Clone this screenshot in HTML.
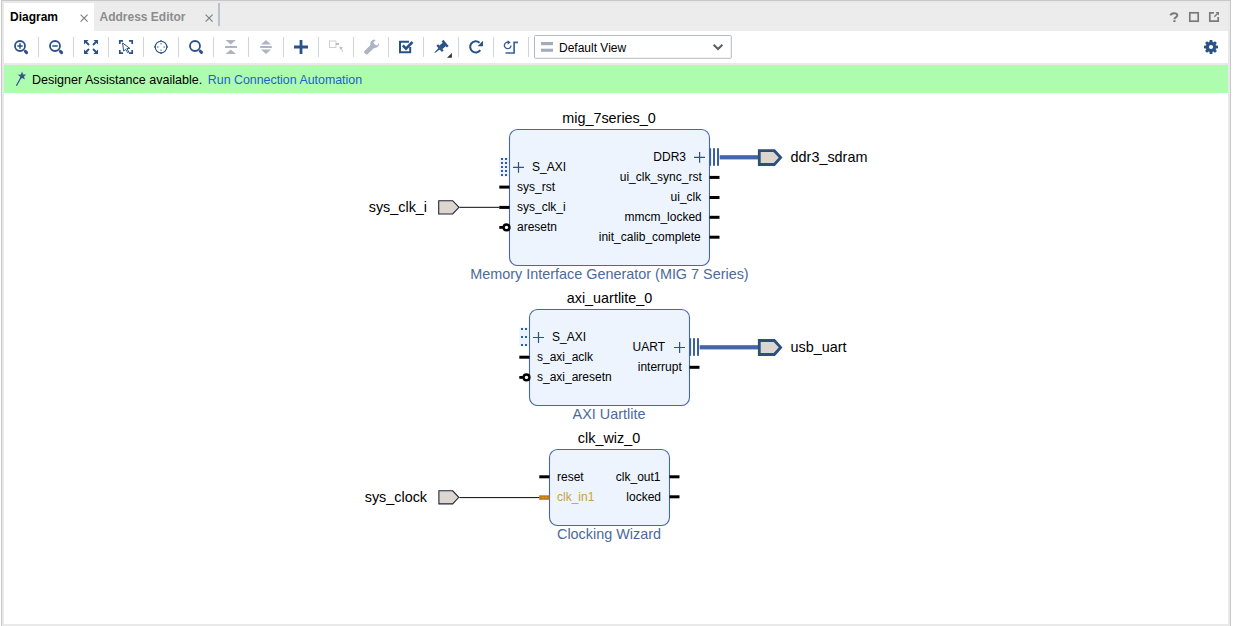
<!DOCTYPE html>
<html><head><meta charset="utf-8">
<style>
html,body{margin:0;padding:0;width:1234px;height:626px;overflow:hidden;background:#fff;}
body{position:relative;font-family:"Liberation Sans",sans-serif;}
.a{position:absolute;}
svg{position:absolute;left:0;top:0;}
text{font-family:"Liberation Sans",sans-serif;}
</style></head>
<body>
<!-- frame -->
<div class="a" style="left:1px;top:0;width:1230px;height:626px;background:#e9e9e9;"></div>
<div class="a" style="left:1px;top:0;width:1230px;height:1px;background:#c8c8c8;"></div>
<div class="a" style="left:1px;top:0;width:1px;height:626px;background:#c8c8c8;"></div>
<div class="a" style="left:1230px;top:0;width:1px;height:626px;background:#c8c8c8;"></div>
<!-- tab bar -->
<div class="a" style="left:4px;top:3px;width:1224px;height:28px;background:#ececec;"></div>
<div class="a" style="left:4px;top:3px;width:90px;height:28px;background:#fff;"></div>
<!-- toolbar -->
<div class="a" style="left:4px;top:31px;width:1224px;height:32px;background:#fff;"></div>
<!-- green bar -->
<div class="a" style="left:4px;top:65px;width:1224px;height:28px;background:#aefcae;"></div>
<!-- canvas -->
<div class="a" style="left:4px;top:93px;width:1224px;height:531px;background:#fff;"></div>

<svg width="1234" height="626" viewBox="0 0 1234 626">
<!-- TABS -->
<text x="10" y="21" font-size="12" font-weight="bold" fill="#000">Diagram</text>
<path d="M80.6 14.6 L87.6 21.6 M87.6 14.6 L80.6 21.6" stroke="#808080" stroke-width="1.2" fill="none"/>
<text x="99.5" y="21" font-size="12" font-weight="bold" fill="#8c8c8c">Address Editor</text>
<path d="M205.6 14.6 L212.6 21.6 M212.6 14.6 L205.6 21.6" stroke="#808080" stroke-width="1.2" fill="none"/>
<rect x="218.3" y="3" width="1.4" height="23" fill="#a9afbb"/>
<!-- right tab icons -->
<path d="M1170.6 15.4 C1170.8 12.6 1177.3 12.2 1177.3 15.3 C1177.3 17.4 1174.4 17.3 1174.4 19.3" stroke="#7a7a7a" stroke-width="2" fill="none"/><rect x="1173.3" y="20.2" width="2.2" height="1.8" fill="#7a7a7a"/>
<rect x="1189.8" y="12.8" width="8.4" height="8.4" stroke="#7a7a7a" stroke-width="1.7" fill="none"/>
<path d="M1214 12.8 H1209.8 V21.2 H1218.2 V17" stroke="#7a7a7a" stroke-width="1.7" fill="none"/>
<path d="M1214.3 16.8 L1217.8 13.3" stroke="#7a7a7a" stroke-width="1.4" fill="none"/>
<path d="M1215.5 12 H1219 V15.5 Z" fill="#7a7a7a"/>

<!-- TOOLBAR separators -->
<g fill="#cfd5de">
<rect x="38" y="37" width="1" height="20"/><rect x="73" y="37" width="1" height="20"/>
<rect x="108" y="37" width="1" height="20"/><rect x="143" y="37" width="1" height="20"/>
<rect x="178" y="37" width="1" height="20"/><rect x="213" y="37" width="1" height="20"/>
<rect x="248" y="37" width="1" height="20"/><rect x="283" y="37" width="1" height="20"/>
<rect x="318" y="37" width="1" height="20"/><rect x="353" y="37" width="1" height="20"/>
<rect x="388" y="37" width="1" height="20"/><rect x="423" y="37" width="1" height="20"/>
<rect x="458" y="37" width="1" height="20"/><rect x="493" y="37" width="1" height="20"/>
<rect x="528" y="37" width="1" height="20"/>
</g>
<!-- TOOLBAR icons -->
<g stroke="#2a5288" fill="none">
 <!-- zoom in -->
 <circle cx="20" cy="46" r="5" stroke-width="1.8"/>
 <path d="M17.3 46 H22.7 M20 43.3 V48.7" stroke-width="1.5"/>
 <path d="M25.4 51.4 L26.6 52.6" stroke-width="3" stroke-linecap="round"/>
 <!-- zoom out -->
 <circle cx="55" cy="46" r="5" stroke-width="1.8"/>
 <path d="M52.2 46 H57.8" stroke-width="1.5"/>
 <path d="M60.4 51.4 L61.6 52.6" stroke-width="3" stroke-linecap="round"/>
 <!-- search -->
 <circle cx="195" cy="46" r="5" stroke-width="1.8"/>
 <path d="M200.3 51.2 L201.5 52.4" stroke-width="3" stroke-linecap="round"/>
 <!-- crosshair -->
 <circle cx="161" cy="47" r="5.8" stroke-width="1.15"/>
 <path d="M161 40.2 V41.6 M161 52.4 V53.8 M154.2 47 H155.6 M166.4 47 H167.8" stroke-width="1.6"/>
 <path d="M161 43 V44.6 M161 49.4 V51 M157 47 H158.6 M163.4 47 H165" stroke="#8294b4" stroke-width="1.4"/>
 <!-- plus -->
 <path d="M294 47 H308 M301 40 V54" stroke-width="2.8"/>
 <!-- select brackets -->
 <path d="M119.8 44 V40.8 H123 M129 40.8 H132.2 V44 M132.2 50 V53.2 H129 M123 53.2 H119.8 V50" stroke-width="1.7"/>
 <!-- validate -->
 <path d="M409 41.8 H400 V52.2 H410.2 V47" stroke-width="2"/>
 <path d="M402.8 45.3 L406 48.6 L412.5 42" stroke-width="2.6"/>
 <!-- refresh -->
 <path d="M480.3 50.2 A5.6 5.6 0 1 1 479.6 42.8" stroke-width="2"/>
 <!-- regenerate -->
 <path d="M509.3 42.5 A3.3 3.3 0 1 0 511 45.5" stroke-width="1.3" stroke="#2d5a9a"/>
 <path d="M505.5 53 H514.1 V42.4 H518" stroke-width="1.7" stroke="#3862a6"/>
</g>
<g fill="#2a5288">
 <!-- fit arrows -->
 <path d="M84 40 H88.6 L84 44.6 Z M98 40 V44.6 L93.4 40 Z M84 54 V49.4 L88.6 54 Z M98 54 H93.4 L98 49.4 Z"/>
 <path d="M85.5 41.5 L89 45 M96.5 41.5 L93 45 M85.5 52.5 L89 49 M96.5 52.5 L93 49" stroke="#2a5288" stroke-width="1.8"/>
 <!-- select cursor -->
 <path d="M122.6 43 L123.6 51.2 L125.6 49.2 L127.6 52.6 L128.8 52 L126.9 48.6 L129.8 48.4 Z" fill="#fff" stroke="#2a5288" stroke-width="1"/>
 <!-- refresh arrow head -->
 <path d="M483 40.8 V46.2 H477.6 Z"/>
 <!-- regenerate arrow head -->
 <path d="M507.8 40.3 L510.6 42.6 L507.6 44.4 Z"/>
 <!-- pin -->
 <g transform="translate(434.6 52.8) rotate(-41)"><path d="M0 -0.4 L6.5 -1.1 V1.1 L0 0.4 Z"/><rect x="6" y="-4.2" width="2.3" height="8.4"/><rect x="8" y="-2.3" width="5.5" height="4.6"/><rect x="12.8" y="-4" width="2.3" height="8"/></g>
 <!-- gear -->
 <g transform="translate(1211 47)">
  <path d="M-1.3 -7 H1.3 L1.8 -4 H-1.8 Z"/><path d="M-1.3 -7 H1.3 L1.8 -4 H-1.8 Z" transform="rotate(45)"/>
  <path d="M-1.3 -7 H1.3 L1.8 -4 H-1.8 Z" transform="rotate(90)"/><path d="M-1.3 -7 H1.3 L1.8 -4 H-1.8 Z" transform="rotate(135)"/>
  <path d="M-1.3 -7 H1.3 L1.8 -4 H-1.8 Z" transform="rotate(180)"/><path d="M-1.3 -7 H1.3 L1.8 -4 H-1.8 Z" transform="rotate(225)"/>
  <path d="M-1.3 -7 H1.3 L1.8 -4 H-1.8 Z" transform="rotate(270)"/><path d="M-1.3 -7 H1.3 L1.8 -4 H-1.8 Z" transform="rotate(315)"/>
  <circle r="5.1"/>
  <circle r="2.1" fill="#fff"/>
 </g>
</g>
<path d="M447 57.8 L451.9 53 V57.8 Z" fill="#333"/>
<!-- disabled icons -->
<g fill="#aeb5c2">
 <path d="M225.5 40 H236 L230.75 44.5 Z M225 46 H237 V48 H225 Z M225.5 54 H236 L230.75 49.5 Z"/>
 <path d="M261 44.5 H271 L266 40 Z M260.2 46 H271.8 V48 H260.2 Z M261 49.5 H271 L266 54 Z"/>
 <!-- wrench -->
 <path d="M364.2 51.2 L370.5 44.9 C369.6 42.4 371.6 39.6 374.5 39.8 L375.8 40.1 L373.3 42.6 L374.8 44.6 L377 45.4 L379 43.3 C379.4 46.4 376.6 48.4 374.1 47.9 L367.5 54.2 C366.3 55.2 363.3 52.5 364.2 51.2 Z"/>
</g>
<g>
 <rect x="329.5" y="41" width="6.4" height="6.5" stroke="#cfcfcf" stroke-width="1" fill="none"/>
 <rect x="336" y="43" width="3" height="2" fill="#b8c0cc"/>
 <path d="M339.6 46.6 L343 47.4 L341.7 48.4 L343.3 51.6 L342.6 52 L341 48.9 L339.9 49.9 Z" fill="#b8c0cc"/>
</g>
<!-- dropdown -->
<rect x="534.5" y="35.5" width="196.8" height="22.8" rx="1" fill="#fff" stroke="#b3b9c2" stroke-width="1"/>
<rect x="541" y="42" width="12" height="3.2" fill="#a3abbb"/>
<rect x="541" y="48.7" width="12" height="3.1" fill="#a3abbb"/>
<text x="559" y="51.8" font-size="12" fill="#000">Default View</text>
<path d="M713.6 44.8 L718 49 L722.4 44.8" stroke="#606060" stroke-width="2.1" fill="none"/>

<!-- GREEN BAR -->
<path d="M16.4 85.8 L21.3 77" stroke="#34558a" stroke-width="1.2"/>
<path d="M22 71.6 L23.2 74.6 L26.2 74.4 L24 76.6 L24.9 79.6 L22.1 78.1 L19.5 79.8 L20.2 76.7 L17.8 74.8 L20.9 74.6 Z" fill="#34558a"/>
<text x="32" y="83.8" font-size="12.55" fill="#000">Designer Assistance available.</text>
<text x="207.8" y="83.8" font-size="12.4" fill="#2060d6">Run Connection Automation</text>
</svg>

<!-- DIAGRAM -->
<svg width="1234" height="626" viewBox="0 0 1234 626" id="diag">
<defs>
 <pattern id="dotp" width="3" height="3" patternUnits="userSpaceOnUse"><rect width="3" height="3" fill="#ddd5cf"/><rect x="1" y="1" width="1" height="1" fill="#d2ccd0"/></pattern>
</defs>
<!-- ===== mig_7series_0 ===== -->
<rect x="509.5" y="129.5" width="200" height="136" rx="8" ry="8" fill="#edf4fd" stroke="#4568a8" stroke-width="1.1"/>
<text x="609" y="122.8" font-size="14.4" text-anchor="middle" fill="#000">mig_7series_0</text>
<text x="609.5" y="279" font-size="14.4" text-anchor="middle" fill="#4a6a9c">Memory Interface Generator (MIG 7 Series)</text>
<!-- S_AXI interface -->
<rect x="499.5" y="157.5" width="9.5" height="19" fill="#eaf2fc"/>
<g fill="#2e5ca8">
 <rect x="501" y="158" width="2" height="2"/><rect x="505" y="158" width="2" height="2"/>
 <rect x="501" y="162" width="2" height="2"/><rect x="505" y="162" width="2" height="2"/>
 <rect x="501" y="166" width="2" height="2"/><rect x="505" y="166" width="2" height="2"/>
 <rect x="501" y="170" width="2" height="2"/><rect x="505" y="170" width="2" height="2"/>
 <rect x="501" y="174" width="2" height="2"/><rect x="505" y="174" width="2" height="2"/>
</g>
<path d="M513 167.4 H524 M518.5 162 V172.8" stroke="#2f5282" stroke-width="1.2" fill="none"/>
<g font-size="12" fill="#000">
 <text x="532" y="171">S_AXI</text>
 <text x="517" y="190.8">sys_rst</text>
 <text x="517" y="210.8">sys_clk_i</text>
 <text x="517" y="230.8">aresetn</text>
</g>
<g fill="#000">
 <rect x="499.3" y="185.6" width="10.2" height="3"/>
 <rect x="499.3" y="205.9" width="10.2" height="3"/>
 <rect x="499.3" y="226" width="4.5" height="2.8"/>
</g>
<circle cx="506.5" cy="227.4" r="2.9" fill="#fff" stroke="#000" stroke-width="2.4"/>
<!-- right pins -->
<g font-size="12" fill="#000" text-anchor="end">
 <text x="686" y="160.6">DDR3</text>
 <text x="701.8" y="180.7">ui_clk_sync_rst</text>
 <text x="701.3" y="200.8">ui_clk</text>
 <text x="701.8" y="220.7">mmcm_locked</text>
 <text x="700.8" y="240.6">init_calib_complete</text>
</g>
<path d="M694 157.4 H705 M699.6 152 V162.8" stroke="#2f5282" stroke-width="1.2" fill="none"/>
<g fill="#000">
 <rect x="709.5" y="175.9" width="10" height="3"/>
 <rect x="709.5" y="196" width="10" height="3"/>
 <rect x="709.5" y="215.8" width="10" height="3"/>
 <rect x="709.5" y="235.7" width="10" height="3"/>
</g>
<g fill="#3a5fa5">
 <rect x="709.6" y="148.2" width="1.5" height="17.6"/>
 <rect x="713" y="148.2" width="2" height="17.6"/>
 <rect x="717" y="148.2" width="2" height="17.6"/>
</g>
<rect x="719.7" y="155.2" width="40" height="4.2" fill="#4565a8"/>
<path d="M759.3 150.7 H774.3 L780.6 157.6 L774.3 164.5 H759.3 Z" fill="#ddd5cf" stroke="#2c4f7c" stroke-width="2.8"/>
<text x="790.6" y="161.9" font-size="14.4" fill="#000">ddr3_sdram</text>
<!-- sys_clk_i port -->
<text x="368.7" y="211.6" font-size="14.4" fill="#000">sys_clk_i</text>
<path d="M438.7 200.7 H452.7 L459 207.35 L452.7 214 H438.7 Z" fill="#ddd5cf" stroke="#1f2636" stroke-width="1.1"/>
<rect x="459.5" y="206.8" width="40" height="1.1" fill="#222"/>

<!-- ===== axi_uartlite_0 ===== -->
<rect x="529.5" y="309.5" width="160" height="96" rx="8" ry="8" fill="#edf4fd" stroke="#4568a8" stroke-width="1.1"/>
<text x="609.5" y="303" font-size="14.4" text-anchor="middle" fill="#000">axi_uartlite_0</text>
<text x="609" y="419.2" font-size="14.4" text-anchor="middle" fill="#4a6a9c">AXI Uartlite</text>
<rect x="519.5" y="327.5" width="9.5" height="19" fill="#eaf2fc"/>
<g fill="#2e5ca8">
 <rect x="521" y="328" width="2" height="2"/><rect x="525" y="328" width="2" height="2"/>
 <rect x="521" y="336" width="2" height="2"/><rect x="525" y="336" width="2" height="2"/>
 <rect x="521" y="344" width="2" height="2"/><rect x="525" y="344" width="2" height="2"/>
</g>
<path d="M533 337.5 H544 M538.5 332.1 V342.9" stroke="#2f5282" stroke-width="1.2" fill="none"/>
<g font-size="12" fill="#000">
 <text x="552" y="341">S_AXI</text>
 <text x="537" y="360.8">s_axi_aclk</text>
 <text x="537" y="380.6">s_axi_aresetn</text>
</g>
<g fill="#000">
 <rect x="519.3" y="355.7" width="10.2" height="3"/>
 <rect x="519.3" y="376" width="4.5" height="2.8"/>
</g>
<circle cx="526.5" cy="377.4" r="2.9" fill="#fff" stroke="#000" stroke-width="2.4"/>
<g font-size="12" fill="#000" text-anchor="end">
 <text x="665" y="350.7">UART</text>
 <text x="681.8" y="370.6">interrupt</text>
</g>
<path d="M674 347.5 H685 M679.6 342.1 V352.9" stroke="#2f5282" stroke-width="1.2" fill="none"/>
<rect x="689.5" y="365.8" width="10" height="3" fill="#000"/>
<g fill="#3a5fa5">
 <rect x="689.6" y="338.2" width="1.5" height="17.6"/>
 <rect x="693" y="338.2" width="2" height="17.6"/>
 <rect x="697" y="338.2" width="2" height="17.6"/>
</g>
<rect x="699.7" y="345.2" width="60" height="4.2" fill="#4565a8"/>
<path d="M759.3 340.5 H774.3 L780.6 347.4 L774.3 354.5 H759.3 Z" fill="#ddd5cf" stroke="#2c4f7c" stroke-width="2.8"/>
<text x="790.6" y="351.7" font-size="14.4" fill="#000">usb_uart</text>

<!-- ===== clk_wiz_0 ===== -->
<rect x="549.5" y="449.5" width="120" height="76" rx="8" ry="8" fill="#edf4fd" stroke="#4568a8" stroke-width="1.1"/>
<text x="609" y="442.6" font-size="14.4" text-anchor="middle" fill="#000">clk_wiz_0</text>
<text x="609" y="538.9" font-size="14.4" text-anchor="middle" fill="#4a6a9c">Clocking Wizard</text>
<g font-size="12">
 <text x="557" y="480.7" fill="#000">reset</text>
 <text x="557" y="500.7" fill="#c9a23c">clk_in1</text>
 <text x="660.5" y="480.7" fill="#000" text-anchor="end">clk_out1</text>
 <text x="661" y="500.7" fill="#000" text-anchor="end">locked</text>
</g>
<g fill="#000">
 <rect x="539.3" y="475.3" width="10.2" height="3"/>
 <rect x="669.5" y="475.3" width="10" height="3"/>
 <rect x="669.5" y="495.3" width="10" height="3"/>
</g>
<rect x="459.5" y="497" width="80" height="1.1" fill="#222"/>
<rect x="539.2" y="495.3" width="10.3" height="4.5" fill="#c27c12"/>
<rect x="542.5" y="497" width="1" height="1" fill="#e0b860"/><rect x="545.5" y="497" width="1" height="1" fill="#e0b860"/>
<text x="364.7" y="501.6" font-size="14.4" fill="#000">sys_clock</text>
<path d="M438.9 490.8 H452.7 L458.8 497.35 L452.7 503.9 H438.9 Z" fill="#ddd5cf" stroke="#1f2636" stroke-width="1.1"/>
</svg>
</body></html>
